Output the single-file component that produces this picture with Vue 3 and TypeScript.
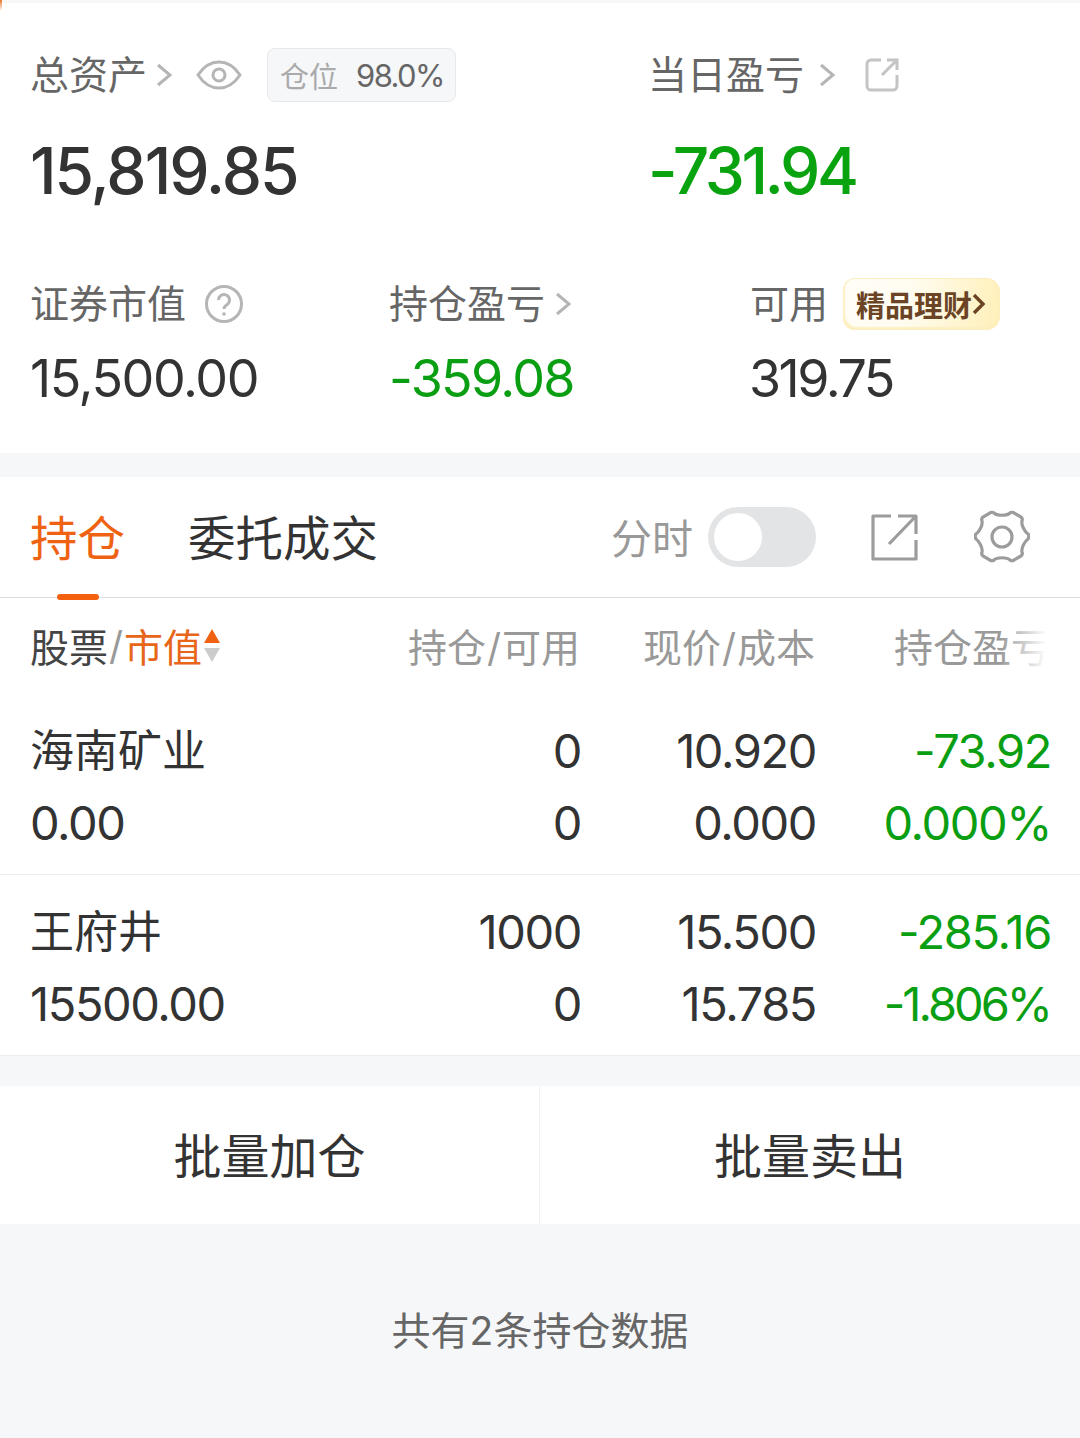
<script setup lang="ts">
interface Row { name: string; value: string; a: string; b: string; c: string; d: string; e: string; f: string; tightRate?: boolean }
const rows: Row[] = [
  { name: '海南矿业', value: '0.00', a: '0', b: '0', c: '10.920', d: '0.000', e: '-73.92', f: '0.000%' },
  { name: '王府井', value: '15500.00', a: '1000', b: '0', c: '15.500', d: '15.785', e: '-285.16', f: '-1.806%', tightRate: true },
]
</script>

<template>
  <div class="page">
    <section class="summary">
      <i class="corner"></i>
      <div class="top">
        <div class="top-left">
          <div class="label-line">
            <span class="label">总资产</span>
            <svg class="chev" width="16" height="24" viewBox="0 0 16 24"><path d="M2 2l12 10L2 22" /></svg>
            <svg class="eye" width="46" height="30" viewBox="0 0 46 30"><path d="M2 15C8 6 15 2 23 2s15 4 21 13c-6 9-13 13-21 13S8 24 2 15z" /><circle cx="23" cy="15" r="6" /></svg>
            <span class="pill"><span class="pill-cn">仓位</span><span class="pill-num">98.0%</span></span>
          </div>
          <div class="big wide">15,819.85</div>
        </div>
        <div class="top-right">
          <div class="label-line">
            <span class="label">当日盈亏</span>
            <svg class="chev chev-r" width="16" height="24" viewBox="0 0 16 24"><path d="M2 2l12 10L2 22" /></svg>
            <svg class="share-s" width="34" height="34" viewBox="0 0 34 34"><path d="M16 2H6a4 4 0 0 0-4 4v22a4 4 0 0 0 4 4h22a4 4 0 0 0 4-4V17M17 17L32 2M22 2h10v10" /></svg>
          </div>
          <div class="big green">-731.94</div>
        </div>
      </div>
      <div class="stats">
        <div class="stat s1">
          <div class="label-line low">
            <span class="label">证券市值</span>
            <svg class="help" width="38" height="38" viewBox="0 0 38 38"><circle cx="19" cy="19" r="17.5" /><path d="M13.5 15a5.5 5.5 0 1 1 8.4 4.7c-1.9 1.2-2.9 2.2-2.9 4.3" /><circle class="dot" cx="19" cy="29" r="1.8" /></svg>
          </div>
          <div class="mid m-wide">15,500.00</div>
        </div>
        <div class="stat s2">
          <div class="label-line low">
            <span class="label">持仓盈亏</span>
            <svg class="chev chev-h" width="16" height="24" viewBox="0 0 16 24"><path d="M2 2l12 10L2 22" /></svg>
          </div>
          <div class="mid green">-359.08</div>
        </div>
        <div class="stat s3">
          <div class="label-line low">
            <span class="label">可用</span>
            <span class="gold">精品理财<svg width="14" height="22" viewBox="0 0 14 22"><path d="M2 2l9 9-9 9" /></svg></span>
          </div>
          <div class="mid m-tight">319.75</div>
        </div>
      </div>
    </section>

    <section class="holdings">
      <div class="tabs">
        <div class="tab active">持仓<i class="underline"></i></div>
        <div class="tab">委托成交</div>
        <div class="tools">
          <span class="fen">分时</span>
          <span class="toggle"><i class="knob"></i></span>
          <svg class="t-share" width="48" height="48" viewBox="0 0 48 48"><path d="M20 3H2v43h43V27M18 31L45 3M27 3h18v18" /></svg>
          <svg class="gear" width="56" height="54" viewBox="0 0 56 54"><path d="M20 3c3 3 13 3 16 0 1-1 3-1 4 0l7 4c1 1 2 2 1 4-1 4 3 11 6 13 1 1 1 3 0 5-3 2-7 9-6 13 1 2 0 3-1 4l-7 4c-1 1-3 1-4 0-3-3-13-3-16 0-1 1-3 1-4 0l-7-4c-1-1-2-2-1-4 1-4-3-11-6-13-1-2-1-4 0-5 3-2 7-9 6-13-1-2 0-3 1-4l7-4c1-1 3-1 4 0z" /><circle cx="28" cy="27" r="10" /></svg>
        </div>
      </div>
      <div class="grid head">
        <div class="h-name"><span class="dark">股票</span><span class="slash">/</span><span class="orange">市值</span><span class="sort"><i class="up"></i><i class="down"></i></span></div>
        <div class="num">持仓<span class="slash">/</span>可用</div>
        <div class="num">现价<span class="slash">/</span>成本</div>
        <div class="num">持仓盈亏</div>
        <i class="fade"></i>
      </div>
      <div v-for="r in rows" :key="r.name" class="grid row">
        <div class="name">{{ r.name }}</div>
        <div class="num val">{{ r.a }}</div>
        <div class="num val">{{ r.c }}</div>
        <div class="num val green">{{ r.e }}</div>
        <div class="val">{{ r.value }}</div>
        <div class="num val">{{ r.b }}</div>
        <div class="num val">{{ r.d }}</div>
        <div class="num val green" :class="{ 'val-tight': r.tightRate }">{{ r.f }}</div>
      </div>
    </section>

    <section class="actions">
      <button class="btn">批量加仓</button>
      <button class="btn">批量卖出</button>
    </section>
    <footer class="foot">共有2条持仓数据</footer>
  </div>
</template>

<style>
html, body { margin: 0; background: #f6f7f9; }
</style>

<style scoped>
.page {
  width: 1080px;
  height: 1438px;
  overflow: hidden;
  background: #f6f7f9;
  font-family: Inter, "Liberation Sans", "Noto Sans CJK SC", sans-serif;
  color: #333;
}
.summary {
  background: #fff;
  height: 453px;
  padding: 45px 30px 0 30px;
  border-top: 3px solid #f7f7f7;
  box-sizing: border-box;
  position: relative;
}
.corner {
  position: absolute;
  left: 0;
  top: -3px;
  width: 2px;
  height: 11px;
  background: linear-gradient(#e8782c, rgba(232, 120, 44, 0));
}
.top { display: flex; }
.top-left { width: 618px; }
.label-line { display: flex; align-items: center; height: 54px; }
.label { font-size: 39px; color: #666; line-height: 54px; }
svg { fill: none; display: block; flex: none; }
.chev { margin-left: 9px; }
.chev path { stroke: #b5b5b5; stroke-width: 3; }
.chev-r { margin-left: 15px; }
.chev-h { margin-left: 10px; }
.eye { margin-left: 24px; }
.eye path, .eye circle { stroke: #b5b5b5; stroke-width: 3; }
.pill {
  margin-left: 25px;
  width: 189px;
  height: 54px;
  box-sizing: border-box;
  border: 1px solid #e8e8ea;
  border-radius: 8px;
  background: #f6f7f9;
  display: flex;
  align-items: center;
  padding-left: 12px;
}
.pill-cn { font-size: 29px; color: #aaa; }
.pill-num { font-size: 31px; color: #666; margin-left: 18px; letter-spacing: -1.6px; }
.share-s { margin-left: 30px; }
.share-s path { stroke: #c4c4c4; stroke-width: 3; }
.big {
  font-size: 64px;
  font-weight: 500;
  letter-spacing: -3.4px;
  line-height: 70px;
  margin-top: 34px;
  color: #333;
}
.big.wide { letter-spacing: -2px; }
.green { color: #0a9e12; }
.big.green { color: #08a30e; }
.stats { display: flex; margin-top: 71px; }
.s1 { width: 359px; }
.s2 { width: 361px; }
.label-line.low { height: 54px; }
.help { margin-left: 19px; }
.help circle, .help path { stroke: #b5b5b5; stroke-width: 3; }
.help .dot { fill: #b5b5b5; stroke: none; }
.mid {
  font-size: 52px;
  letter-spacing: -1.7px;
  line-height: 60px;
  margin-top: 18px;
}
.mid.m-wide { letter-spacing: -1.4px; }
.mid.m-tight { letter-spacing: -2.5px; margin-left: -1px; }
.gold {
  margin-left: 15px;
  width: 157px;
  height: 52px;
  box-sizing: border-box;
  border-radius: 12px 14px 14px 12px;
  background: linear-gradient(100deg, #fffdf5 0%, #fffdf2 40%, #ffefb8 100%);
  box-shadow: inset 2px -3px 2px #fdeec0, inset 0 0 0 1px #fdeec0;
  color: #6b4426;
  font-weight: 700;
  font-size: 29px;
  display: flex;
  align-items: center;
  padding-left: 13px;
}
.gold svg path { stroke: #6b4426; stroke-width: 3.4; }
.holdings { margin-top: 24px; background: #fff; border-bottom: 1px solid #ececec; }
.tabs {
  height: 121px;
  box-sizing: border-box;
  border-bottom: 1px solid #dedede;
  display: flex;
  align-items: center;
  padding: 0 50px 0 30px;
}
.tab { font-size: 47.5px; color: #333; position: relative; line-height: 120px; margin-right: 63px; margin-top: 4px; }
.tab.active { color: #ef6212; }
.underline {
  position: absolute;
  left: 27px;
  width: 42px;
  height: 6px;
  bottom: -1px;
  border-radius: 3px;
  background: #f5600f;
}
.tools { margin-left: auto; display: flex; align-items: center; }
.fen { font-size: 41px; color: #999; margin-top: -2px; }
.toggle {
  width: 108px;
  height: 60px;
  border-radius: 30px;
  background: #e3e4e6;
  margin-left: 15px;
  display: flex;
  align-items: center;
  padding-left: 6px;
  box-sizing: border-box;
}
.knob { width: 48px; height: 48px; border-radius: 50%; background: #fff; }
.t-share { margin-left: 55px; }
.t-share path { stroke: #9c9c9c; stroke-width: 3.2; stroke-linejoin: round; }
.gear { margin-left: 55px; }
.gear path, .gear circle { stroke: #9c9c9c; stroke-width: 3.2; }
.grid {
  display: grid;
  grid-template-columns: 1fr 200px 235px 235px;
  padding: 0 30px 0 30px;
  position: relative;
}
.head { height: 106px; align-items: center; font-size: 39px; color: #999; padding-bottom: 12px; box-sizing: border-box; }
.dark { color: #444; }
.slash { color: #999; padding: 0 1px; }
.orange { color: #e8661a; }
.h-name { display: flex; align-items: center; }
.sort { display: flex; flex-direction: column; gap: 5px; margin-left: 2px; }
.sort i { width: 0; height: 0; border-left: 8px solid transparent; border-right: 8px solid transparent; }
.sort .up { border-bottom: 14px solid #ef6212; }
.sort .down { border-top: 14px solid #ccc; }
.fade {
  position: absolute;
  right: 28px;
  top: 20px;
  bottom: 20px;
  width: 52px;
  background: linear-gradient(90deg, rgba(255,255,255,0), #fff 90%);
}
.num { text-align: right; }
.row {
  height: 171px;
  padding-top: 17px;
  box-sizing: border-box;
  align-content: start;
  border-bottom: 1px solid #ececec;
  row-gap: 12px;
}
.row:last-child { border-bottom: 0; height: 180px; padding-top: 27px; row-gap: 12px; }
.name { font-size: 44px; line-height: 60px; color: #333; }
.val { font-size: 47px; letter-spacing: -1.4px; line-height: 60px; }
.num.val { margin-right: -1px; }
.val.val-tight { letter-spacing: -3px; margin-right: 0; }
.actions {
  margin-top: 30px;
  display: grid;
  grid-template-columns: 540px 540px;
  height: 138px;
  background: #fff;
}
.btn {
  border: 0;
  background: #fff;
  font: inherit;
  font-size: 48px;
  color: #333;
  padding: 0 0 4px;
}
.btn:first-child { border-right: 1px solid #f0f0f0; }
.foot {
  text-align: center;
  font-size: 39px;
  color: #666;
  margin-top: 79px;
  line-height: 56px;
}
</style>
